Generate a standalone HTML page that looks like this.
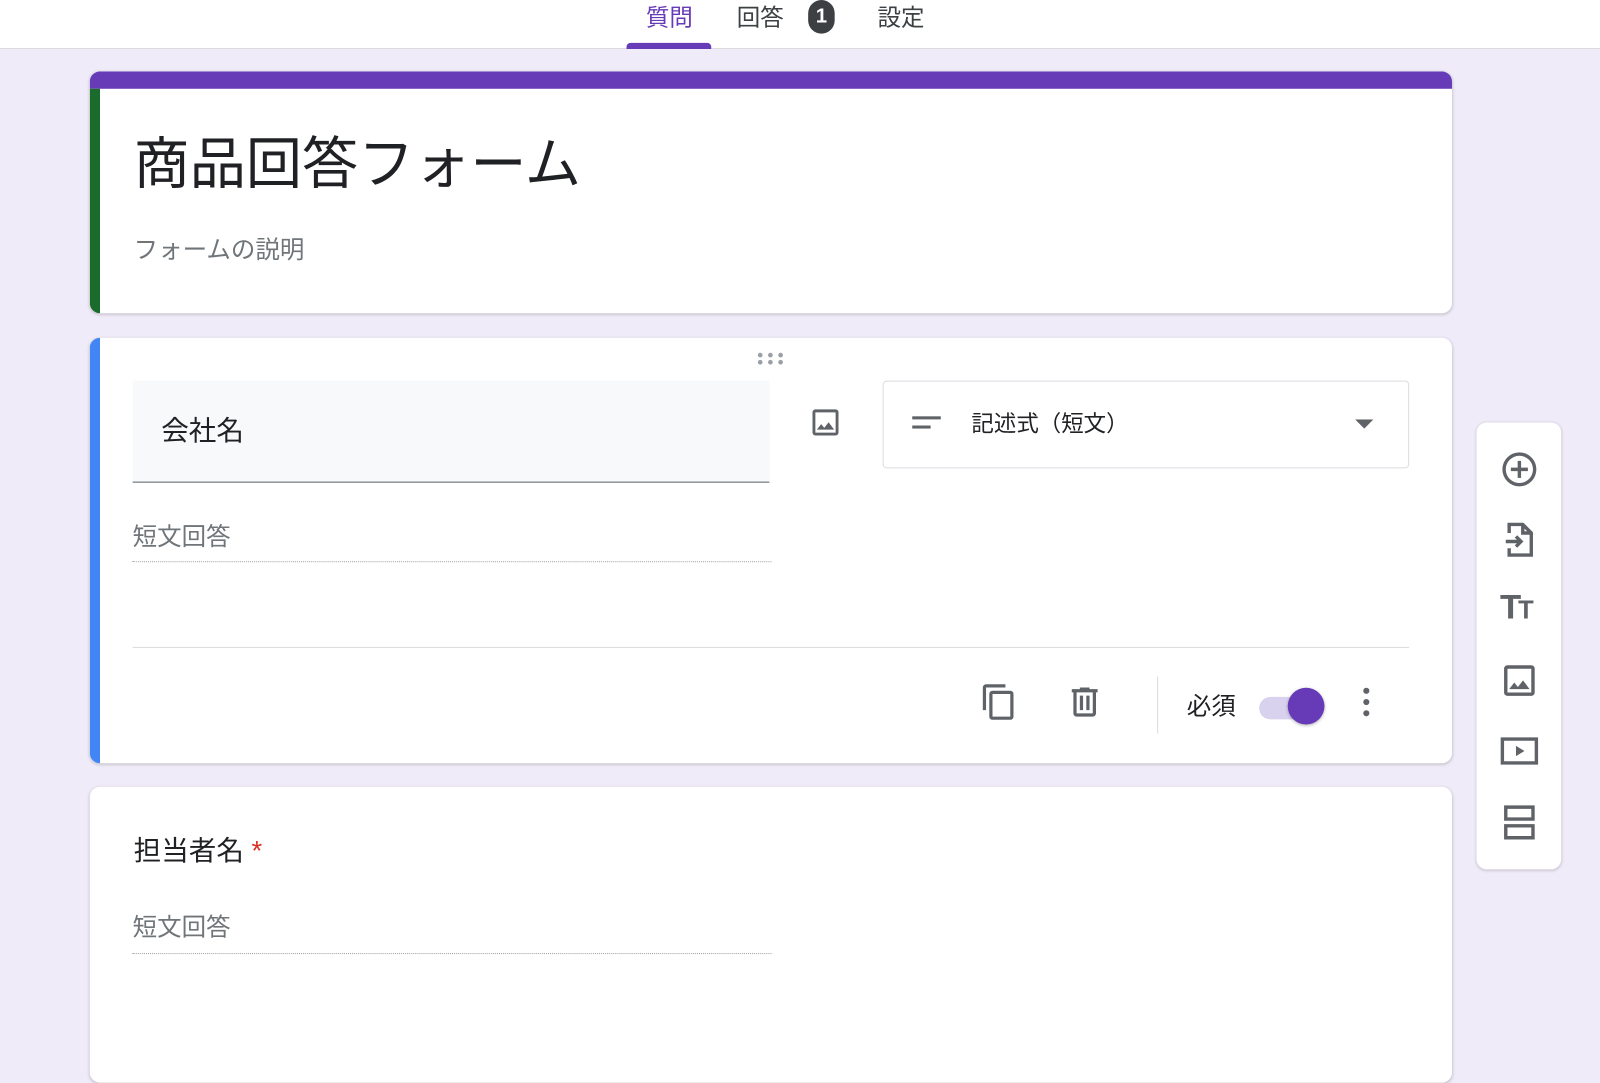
<!DOCTYPE html>
<html><head><meta charset="utf-8"><style>
*{box-sizing:border-box;margin:0;padding:0}
body{width:1600px;height:1026px;overflow:hidden;background:#efebf8;font-family:"Liberation Sans","Noto Sans CJK JP",sans-serif;position:relative;color:#202124}
#w{position:absolute;left:0;top:0;width:1568px;height:1006px;transform:scale(1.0204);transform-origin:0 0}
.hdr{position:absolute;left:0;top:0;width:1568px;height:48px;background:#fff;border-bottom:1px solid #dadce0}
.tab{position:absolute;top:-2px;font-size:23px;color:#3c4043}
.card{position:absolute;background:#fff;border-radius:10px;box-shadow:0 1px 3px rgba(0,0,0,.2);overflow:hidden}
.abs{position:absolute}
svg{position:absolute}
</style></head><body><div id="w">
<div class="hdr">
<div class="tab" style="left:633px;color:#673ab7">質問</div>
<div class="abs" style="left:614px;top:42px;width:83px;height:6px;background:#673ab7;border-radius:4px 4px 0 0"></div>
<div class="tab" style="left:722px">回答</div>
<div class="abs" style="left:792px;top:0px;width:26px;height:33px;border-radius:13px;background:#3c4043;color:#fff;font-size:20px;font-weight:bold;text-align:center;line-height:33px">1</div>
<div class="tab" style="left:860px">設定</div>
</div>

<div class="card" style="left:88px;top:70px;width:1335px;height:237px">
<div class="abs" style="left:0;top:0;width:100%;height:17px;background:#673ab7"></div>
<div class="abs" style="left:0;top:17px;width:10px;height:220px;background:#1b6b2c"></div>
<div class="abs" style="left:43px;top:46px;font-size:55px;color:#202124">商品回答フォーム</div>
<div class="abs" style="left:43px;top:155px;font-size:24px;color:#70757a">フォームの説明</div>
</div>

<div class="card" style="left:88px;top:331px;width:1335px;height:417px">
<div class="abs" style="left:0;top:0;width:10px;height:100%;background:#4285f4"></div>
<svg style="left:654px;top:14px" width="30" height="14"><g fill="#9aa0a6"><circle cx="3" cy="3" r="2.3"/><circle cx="13" cy="3" r="2.3"/><circle cx="23" cy="3" r="2.3"/><circle cx="3" cy="10" r="2.3"/><circle cx="13" cy="10" r="2.3"/><circle cx="23" cy="10" r="2.3"/></g></svg>
<div class="abs" style="left:42px;top:42px;width:624px;height:100px;background:#f8f9fa;border-bottom:1.5px solid #5f6368"></div>
<div class="abs" style="left:70px;top:69px;font-size:27px">会社名</div>
<svg style="left:704px;top:66px" width="34" height="34" viewBox="0 0 24 24"><path fill="#5f6368" d="M19 5v14H5V5h14m0-2H5a2 2 0 0 0-2 2v14a2 2 0 0 0 2 2h14a2 2 0 0 0 2-2V5a2 2 0 0 0-2-2zm-4.86 8.86-3 3.87L9 13.14 6 17h12l-3.86-5.14z"/></svg>
<div class="abs" style="left:777px;top:42px;width:516px;height:86px;border:1.5px solid #dadce0;border-radius:4px"></div>
<div class="abs" style="left:806px;top:77px;width:28px;height:3px;background:#5f6368"></div>
<div class="abs" style="left:806px;top:86px;width:18px;height:3px;background:#5f6368"></div>
<div class="abs" style="left:864px;top:67px;font-size:22px">記述式（短文）</div>
<svg style="left:1240px;top:80px" width="18" height="10"><path d="M0 0h18L9 9z" fill="#5f6368"/></svg>
<div class="abs" style="left:42px;top:175px;font-size:24px;color:#70757a">短文回答</div>
<div class="abs" style="left:42px;top:219px;width:626px;border-bottom:1.5px dotted #9aa0a6"></div>
<div class="abs" style="left:42px;top:303px;width:1251px;height:1px;background:#dadce0"></div>
<svg style="left:872px;top:338px" width="38" height="38" viewBox="0 0 24 24"><path fill="#5f6368" d="M16 1H4a2 2 0 0 0-2 2v14h2V3h12V1zm3 4H8a2 2 0 0 0-2 2v14a2 2 0 0 0 2 2h11a2 2 0 0 0 2-2V7a2 2 0 0 0-2-2zm0 16H8V7h11v14z"/></svg>
<svg style="left:956px;top:338px" width="38" height="38" viewBox="0 0 24 24"><path fill="#5f6368" d="M15 4V3H9v1H4v2h1v13a2 2 0 0 0 2 2h10a2 2 0 0 0 2-2V6h1V4h-5zm2 15H7V6h10v13zM9 8h2v9H9zm4 0h2v9h-2z"/></svg>
<div class="abs" style="left:1046px;top:332px;width:1px;height:56px;background:#dadce0"></div>
<div class="abs" style="left:1075px;top:341px;font-size:24px">必須</div>
<div class="abs" style="left:1146px;top:352px;width:56px;height:22px;border-radius:11px;background:#d9d2ee"></div>
<div class="abs" style="left:1174px;top:343px;width:36px;height:36px;border-radius:50%;background:#673ab7;box-shadow:0 1px 3px rgba(0,0,0,.3)"></div>
<svg style="left:1246px;top:342px" width="10" height="32"><g fill="#5f6368"><circle cx="5" cy="4" r="3"/><circle cx="5" cy="15" r="3"/><circle cx="5" cy="26" r="3"/></g></svg>
</div>

<div class="card" style="left:88px;top:771px;width:1335px;height:290px">
<div class="abs" style="left:43px;top:41px;font-size:27px">担当者名 <span style="color:#d93025">*</span></div>
<div class="abs" style="left:42px;top:118px;font-size:24px;color:#70757a">短文回答</div>
<div class="abs" style="left:42px;top:163px;width:626px;border-bottom:1.5px dotted #9aa0a6"></div>
</div>

<div class="card" style="left:1447px;top:414px;width:83px;height:438px">
<svg style="left:22px;top:26px" width="40" height="40" viewBox="0 0 24 24"><path fill="#5f6368" d="M13 7h-2v4H7v2h4v4h2v-4h4v-2h-4V7zm-1-5a10 10 0 1 0 0 20 10 10 0 0 0 0-20zm0 18a8 8 0 1 1 0-16 8 8 0 0 1 0 16z"/></svg>
<svg style="left:22px;top:95px" width="40" height="40" viewBox="0 0 24 24"><path fill="none" stroke="#5f6368" stroke-width="2" d="M6 8V3h8l5 5v13H6v-4M14 3v5h5M4 13h9M10 10l3 3-3 3"/></svg>
<div class="abs" style="left:23px;top:162px;font-size:34px;font-weight:bold;color:#5f6368;letter-spacing:-3px">T<span style="font-size:25px">T</span></div>
<svg style="left:22px;top:233px" width="40" height="40" viewBox="0 0 24 24"><path fill="#5f6368" d="M19 5v14H5V5h14m0-2H5a2 2 0 0 0-2 2v14a2 2 0 0 0 2 2h14a2 2 0 0 0 2-2V5a2 2 0 0 0-2-2zm-4.86 8.86-3 3.87L9 13.14 6 17h12l-3.86-5.14z"/></svg>
<svg style="left:22px;top:302px" width="40" height="40" viewBox="0 0 24 24"><path fill="none" stroke="#5f6368" stroke-width="2" d="M2 5h20v14H2z"/><path fill="#5f6368" d="M10 9v6l5-3z"/></svg>
<svg style="left:22px;top:372px" width="40" height="40" viewBox="0 0 24 24"><path fill="none" stroke="#5f6368" stroke-width="2" d="M4 3h16v7H4zM4 14h16v7H4z"/></svg>
</div>
</div></body></html>
